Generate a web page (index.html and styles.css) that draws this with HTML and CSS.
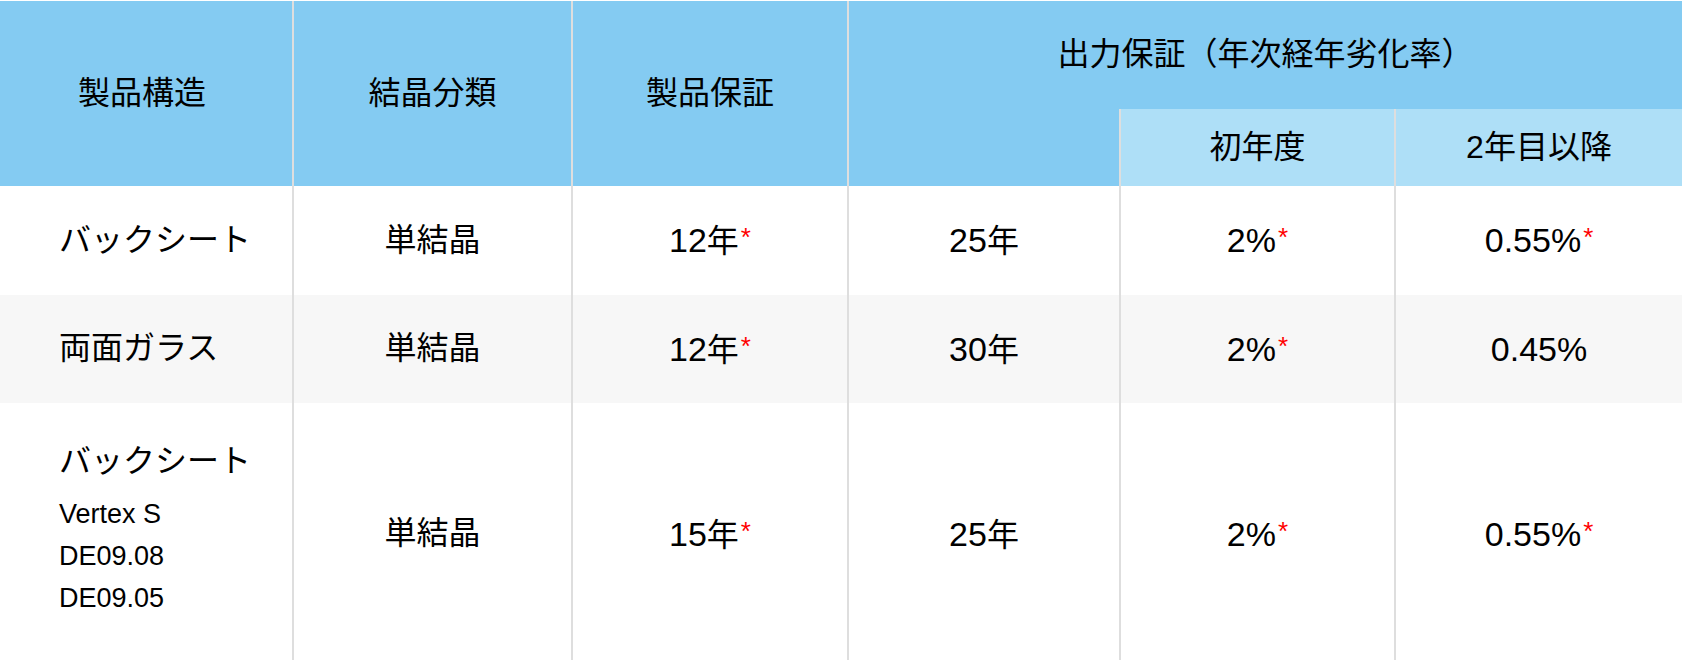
FILE: index.html
```html
<!DOCTYPE html>
<html lang="ja">
<head>
<meta charset="utf-8">
<title>製品保証</title>
<link rel="stylesheet" href="styles.css">
</head>
<body>
<div class="wrap">
<table class="spec">
  <colgroup>
    <col class="c1"><col class="c2"><col class="c3"><col class="c4"><col class="c5"><col class="c6">
  </colgroup>
  <thead>
    <tr>
      <th rowspan="2" class="hd first">製品構造</th>
      <th rowspan="2" class="hd bl">結晶分類</th>
      <th rowspan="2" class="hd bl">製品保証</th>
      <th colspan="3" class="hd bl group">出力保証（年次経年劣化率）</th>
    </tr>
    <tr>
      <th class="hd bl blank"></th>
      <th class="sub bl">初年度</th>
      <th class="sub bl">2年目以降</th>
    </tr>
  </thead>
  <tbody>
    <tr class="row r1">
      <td class="name">バックシート</td>
      <td class="bl">単結晶</td>
      <td class="bl"><span class="n">12</span>年<span class="ast">*</span></td>
      <td class="bl"><span class="n">25</span>年</td>
      <td class="bl"><span class="n">2%</span><span class="ast">*</span></td>
      <td class="bl"><span class="n">0.55%</span><span class="ast">*</span></td>
    </tr>
    <tr class="row r2 alt">
      <td class="name">両面ガラス</td>
      <td class="bl">単結晶</td>
      <td class="bl"><span class="n">12</span>年<span class="ast">*</span></td>
      <td class="bl"><span class="n">30</span>年</td>
      <td class="bl"><span class="n">2%</span><span class="ast">*</span></td>
      <td class="bl"><span class="n">0.45%</span></td>
    </tr>
    <tr class="row r3">
      <td class="name multi">
        <div class="main">バックシート</div>
        <div class="models">
          <div>Vertex S</div>
          <div>DE09.08</div>
          <div>DE09.05</div>
        </div>
      </td>
      <td class="bl">単結晶</td>
      <td class="bl"><span class="n">15</span>年<span class="ast">*</span></td>
      <td class="bl"><span class="n">25</span>年</td>
      <td class="bl"><span class="n">2%</span><span class="ast">*</span></td>
      <td class="bl"><span class="n">0.55%</span><span class="ast">*</span></td>
    </tr>
  </tbody>
</table>
</div>
</body>
</html>
```
FILE: styles.css
```css
html, body {
  margin: 0;
  padding: 0;
  background: #ffffff;
}

body {
  font-family: "Liberation Sans", "Noto Sans CJK JP", sans-serif;
  color: #000000;
  overflow: hidden;
}

.wrap {
  padding-top: 1px;
}

.spec {
  width: 1682px;
  table-layout: fixed;
  border-collapse: separate;
  border-spacing: 0;
}

.c1 { width: 292px; }
.c2 { width: 279px; }
.c3 { width: 276px; }
.c4 { width: 272px; }
.c5 { width: 275px; }
.c6 { width: 288px; }

.spec th,
.spec td {
  padding: 0;
  box-sizing: border-box;
  vertical-align: middle;
  text-align: center;
  font-size: 32px;
  font-weight: normal;
  line-height: 1.3;
}

.spec .bl {
  border-left: 2px solid #dedede;
}

.hd {
  background: #84cbf2;
}

.spec th.first {
  padding-right: 8px;
}

.group {
  height: 108px;
}

.sub {
  background: #aedff7;
  height: 77px;
}

.blank {
  height: 77px;
}

.r1 td { height: 109px; }
.r2 td { height: 108px; }
.r3 td { height: 262px; }

.alt td {
  background: #f7f7f7;
}

.spec td.name {
  text-align: left;
  padding-left: 59px;
}

.n {
  font-size: 34px;
}

.ast {
  color: #ff0000;
  font-size: 26px;
  vertical-align: 6px;
  margin-left: 2px;
}

.main {
  line-height: 48px;
}

.models {
  margin-top: 8px;
  font-size: 27px;
  line-height: 42px;
}

.spec td.multi {
  padding-bottom: 12px;
}
```
